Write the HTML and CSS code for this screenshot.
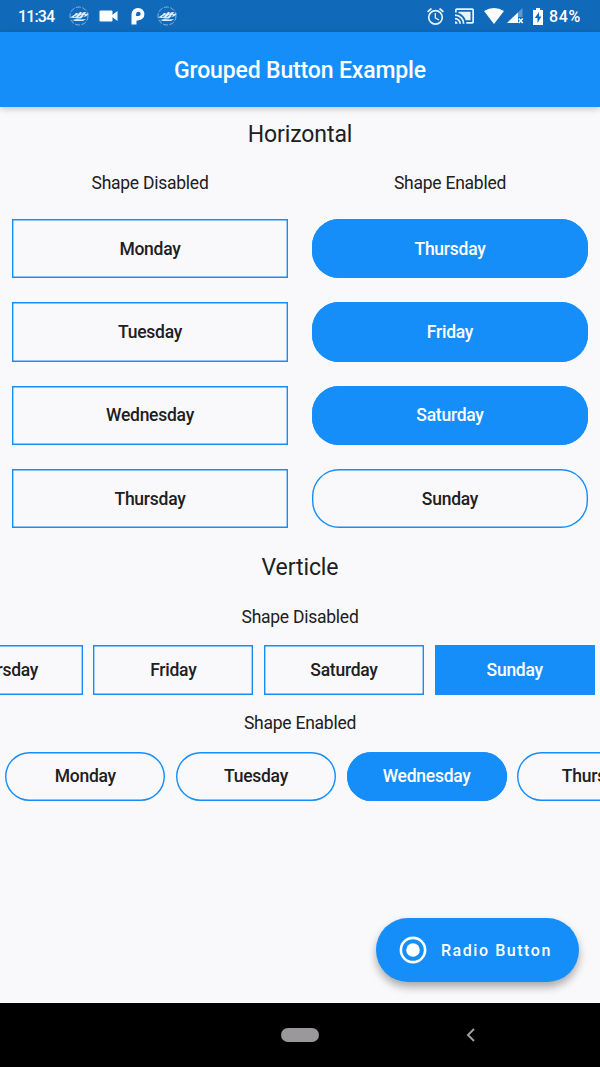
FILE: index.html
```html
<!DOCTYPE html>
<html lang="en">
<head>
<meta charset="utf-8">
<title>Grouped Button Example</title>
<link rel="stylesheet" href="styles.css">
</head>
<body>
<div class="screen">
  <div class="status">
    <div class="status-left">
      <span class="clock">11:34</span>
      <svg class="badge" viewBox="0 0 20 20"><circle cx="10" cy="10" r="9" fill="none" stroke="#8fbde6" stroke-width=".9" stroke-dasharray="5 1.5"/><path d="M1 11.500l4-2.500 2-2h2l-1 2 3-3h2l-1 2 3-2h2l-1 2 4-.5-3 3h-3l-2 2h-3l-4-.5zM3 14l5-1 4 .5 5-.5-3 2H6z" fill="#dcecfa"/><path d="M5 11l3-1.500M9.500 11l3-2M14 10l2-1" stroke="#1069b9" stroke-width=".8"/></svg>
      <svg class="video" viewBox="0 0 20 12"><path d="M1.500.5h11A1 1 0 0 1 13.500 1.500v3.200L18.500 1v10l-5-3.700v3.200a1 1 0 0 1-1 1h-11a1 1 0 0 1-1-1v-9a1 1 0 0 1 1-1z" fill="#fff"/></svg>
      <svg class="park" viewBox="0 0 13 17"><path fill-rule="evenodd" d="M6.700 0a6.200 6.200 0 0 1 0 12.400H5V16.500H0V6.500A6.500 6.500 0 0 1 6.700 0zM7 3.800a2.400 2.400 0 0 0-2.400 2.400v1.900h2.400a2.150 2.150 0 0 0 0-4.300z" fill="#fff"/></svg>
      <svg class="badge" viewBox="0 0 20 20"><circle cx="10" cy="10" r="9" fill="none" stroke="#8fbde6" stroke-width=".9" stroke-dasharray="5 1.500"/><path d="M1 11.500l4-2.500 2-2h2l-1 2 3-3h2l-1 2 3-2h2l-1 2 4-.5-3 3h-3l-2 2h-3l-4-.5zM3 14l5-1 4 .5 5-.5-3 2H6z" fill="#dcecfa"/><path d="M5 11l3-1.500M9.500 11l3-2M14 10l2-1" stroke="#1069b9" stroke-width=".8"/></svg>
    </div>
    <div class="status-right">
      <svg class="alarm" viewBox="2 2 20 20"><path d="M22 5.720l-4.600-3.860-1.290 1.530 4.600 3.860zM7.880 3.390L6.600 1.860 2 5.710l1.290 1.530zM12.500 8H11v6l4.750 2.850.75-1.230-4-2.370zM12 4a9 9 0 1 0 0 18 9 9 0 0 0 0-18zm0 16a7 7 0 1 1 0-14 7 7 0 0 1 0 14z" fill="#e8f3fc"/></svg>
      <svg class="cast" viewBox="1 3 22 18"><path d="M1 18v3h3a3 3 0 0 0-3-3zm0-4v2a5 5 0 0 1 5 5h2a7 7 0 0 0-7-7zm18-7H5v1.630A13 13 0 0 1 13.370 17H19zM1 10v2a9 9 0 0 1 9 9h2A11 11 0 0 0 1 10zm20-7H3a2 2 0 0 0-2 2v3h2V5h18v14h-7v2h7a2 2 0 0 0 2-2V5a2 2 0 0 0-2-2z" fill="#e8f3fc"/></svg>
      <svg class="wifi" viewBox="0 0 20 16"><path d="M0 3Q10-3 20 3L10 16z" fill="#fff"/></svg>
      <svg class="cell" viewBox="0 0 17 16"><path d="M15.500 0v9H11v6H0z" fill="#5a9bd5"/><path d="M11 4.500V15H0z" fill="#fff"/><path d="M11.700 10.500l4 4.500m0-4.500l-4 4.500" stroke="#fff" stroke-width="1.500"/></svg>
      <svg class="battery" viewBox="0 0 10 17"><path fill-rule="evenodd" d="M3 0h4v2h3v15H0V2h3zM6 4L1.800 10H4.500v5L8.500 8.500H6z" fill="#fff"/></svg>
      <span class="percent">84%</span>
    </div>
  </div>
  <header class="appbar">Grouped Button Example</header>
  <main class="content">
    <h2 class="heading">Horizontal</h2>
    <div class="columns">
      <section class="column">
        <div class="label">Shape Disabled</div>
        <div class="btn">Monday</div>
        <div class="btn">Tuesday</div>
        <div class="btn">Wednesday</div>
        <div class="btn">Thursday</div>
      </section>
      <section class="column round">
        <div class="label">Shape Enabled</div>
        <div class="btn on">Thursday</div>
        <div class="btn on">Friday</div>
        <div class="btn on">Saturday</div>
        <div class="btn">Sunday</div>
      </section>
    </div>
    <h2 class="heading second">Verticle</h2>
    <div class="strip-label">Shape Disabled</div>
    <div class="strip end">
      <div class="btn">Thursday</div>
      <div class="btn">Friday</div>
      <div class="btn">Saturday</div>
      <div class="btn on">Sunday</div>
    </div>
    <div class="strip-label lower">Shape Enabled</div>
    <div class="strip round">
      <div class="btn">Monday</div>
      <div class="btn">Tuesday</div>
      <div class="btn on">Wednesday</div>
      <div class="btn">Thursday</div>
    </div>
    <div class="fab">
      <svg class="radio" viewBox="0 0 28 28"><circle cx="14" cy="14" r="12.100" fill="none" stroke="#fff" stroke-width="2.600"/><circle cx="14" cy="14" r="6.800" fill="#fff"/></svg>
      <span>Radio Button</span>
    </div>
  </main>
  <nav class="navbar">
    <span></span>
    <span class="home"></span>
    <svg class="back" viewBox="0 0 9 14"><path d="M8 1L2 7l6 6" fill="none" stroke="#a3a1a3" stroke-width="1.900"/></svg>
  </nav>
</div>
</body>
</html>
```
FILE: styles.css
```css
* { box-sizing: border-box; }
body {
  margin: 0;
  font-family: Roboto, sans-serif;
  color: #202022;
}
.screen {
  width: 600px;
  height: 1067px;
  display: flex;
  flex-direction: column;
  overflow: hidden;
  background: #f9f9fb;
}
.status {
  height: 32px;
  flex: none;
  display: flex;
  justify-content: space-between;
  align-items: center;
  padding: 0 18px 0 18px;
  background: #1069b9;
  color: #fff;
  font-size: 16px;
  font-weight: 500;
}
.status svg { display: block; flex: none; }
.status-left, .status-right { display: flex; align-items: center; }
.clock { width: 51px; letter-spacing: -.9px; }
.badge { width: 20px; height: 20px; }
.video { width: 20px; height: 12px; margin-left: 10px; }
.park { width: 14px; height: 17px; margin: 0 12px 0 12px; }
.alarm { width: 17px; height: 17px; margin-right: 11px; }
.cast { width: 19px; height: 16px; margin-right: 10px; }
.wifi { width: 20px; height: 16px; margin-right: 3px; }
.cell { width: 17px; height: 16px; margin-right: 9px; }
.battery { width: 10px; height: 17px; margin-right: 6px; }
.percent { width: 33px; white-space: nowrap; letter-spacing: .7px; }
.appbar {
  height: 74.700px;
  flex: none;
  display: flex;
  align-items: center;
  justify-content: center;
  padding-top: 2px;
  background: #168efa;
  color: #fff;
  font-size: 23px;
  letter-spacing: -.15px;
  font-weight: 500;
  box-shadow: 0 2px 6px rgba(0, 0, 0, .22);
  z-index: 1;
}
.content {
  flex: 1;
  min-height: 0;
  position: relative;
  display: flex;
  flex-direction: column;
}
.heading {
  margin: 0;
  height: 54px;
  line-height: 56px;
  text-align: center;
  font-size: 23px;
  letter-spacing: -.1px;
  font-weight: 400;
}
.columns { display: grid; grid-template-columns: 1fr 1fr; }
.column {
  display: flex;
  flex-direction: column;
  gap: 24px;
  padding: 0 12px;
}
.label {
  height: 34.300px;
  line-height: 45px;
  text-align: center;
  font-size: 17.500px;
  letter-spacing: -.25px;
}
.btn {
  height: 59.300px;
  display: flex;
  align-items: center;
  justify-content: center;
  box-shadow: inset 0 0 0 1.400px #168efa;
  font-size: 17.500px;
  letter-spacing: -.25px;
  font-weight: 500;
}
.on { background: #168efa; color: #fff; }
.round .btn { border-radius: 27px; }
.second { margin-top: 12px; }
.strip-label {
  height: 51px;
  line-height: 46px;
  text-align: center;
  font-size: 17.500px;
  letter-spacing: -.25px;
}
.strip {
  display: flex;
  gap: 10.700px;
  padding: 0 5.300px;
  overflow: hidden;
}
.strip .btn { flex: 0 0 160px; height: 49.500px; }
.strip.end { justify-content: flex-end; }
.lower { height: 57px; line-height: 57px; }
.fab {
  position: absolute;
  right: 21px;
  bottom: 21px;
  width: 203px;
  height: 64px;
  display: flex;
  align-items: center;
  gap: 14px;
  padding-left: 23px;
  border-radius: 32px;
  background: #168efa;
  color: #fff;
  font-size: 16px;
  font-weight: 500;
  letter-spacing: 1.550px;
  white-space: nowrap;
  box-shadow: 0 5px 9px rgba(0, 0, 0, .32);
}
.radio { width: 28px; height: 28px; flex: none; }
.navbar {
  height: 64px;
  flex: none;
  display: grid;
  grid-template-columns: 1fr 38px 1fr;
  align-items: center;
  background: #000;
}
.home { height: 14px; border-radius: 7px; background: #9b989b; }
.back { width: 9px; height: 14px; margin-left: 147px; }
```
